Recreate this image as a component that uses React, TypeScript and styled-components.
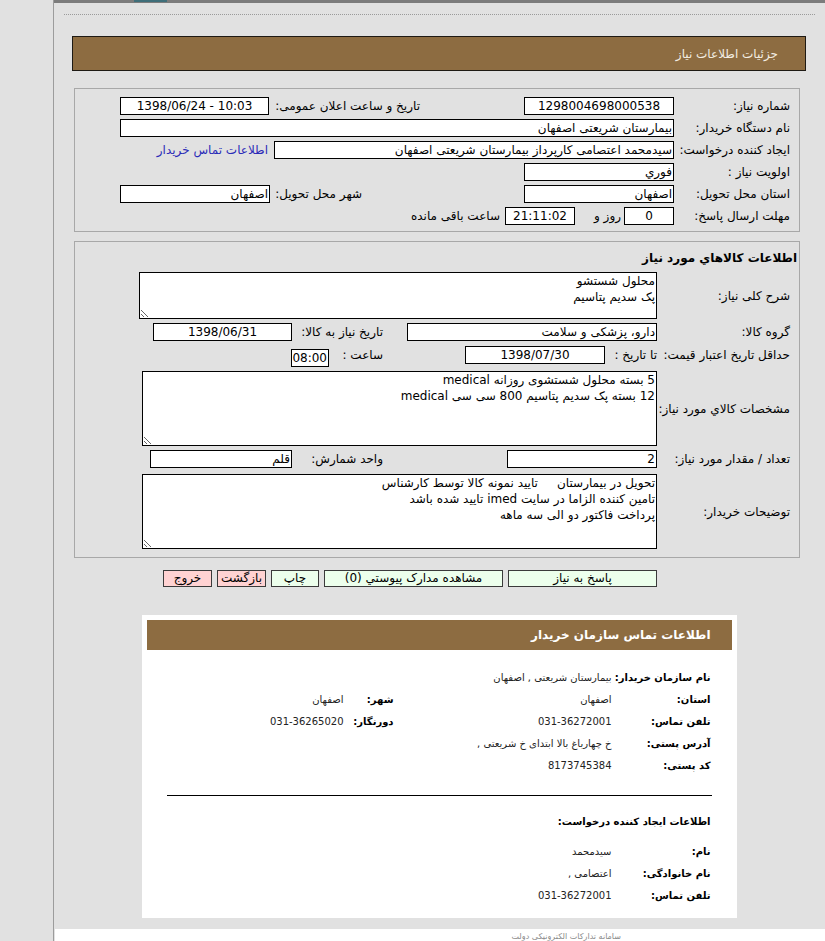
import { Fragment } from "react";
import styled, { createGlobalStyle } from "styled-components";

const GlobalStyle = createGlobalStyle`
  html, body {
    margin: 0;
    padding: 0;
  }
  body {
    background: #e1e1e1;
    font-family: "DejaVu Sans", Tahoma, sans-serif;
    font-size: 12px;
    color: #000;
  }
`;

const Page = styled.div`
  display: flex;
  height: 941px;
  overflow: hidden;
  background: #e1e1e1;
`;

const SideRail = styled.div`
  flex: none;
  width: 53px;
  border-right: 1px solid #9c9c9c;
`;

const Main = styled.div`
  flex: 1;
  min-width: 0;
  display: flex;
  flex-direction: column;
`;

const TopBar = styled.div`
  display: flex;
  height: 3px;
  background: #7c7c7c;
`;

const TopTab = styled.span`
  margin-left: 80px;
  width: 33px;
  height: 2px;
  background: #3f6f7a;
`;

const DottedRule = styled.div`
  margin: 11px 10px 0;
  border-top: 1px dotted #9a9a9a;
`;

const Content = styled.div`
  direction: rtl;
  padding: 0 19px 0 18px;
`;

const Banner = styled.div`
  margin-top: 21px;
  height: 35px;
  box-sizing: border-box;
  display: flex;
  align-items: center;
  padding-right: 27px;
  border: 1px solid #1e1a14;
  background: #8d6c41;
  color: #f3ede2;
`;

const Section = styled.div<{ $top: number; $pad: string }>`
  margin: ${p => p.$top}px 6px 0 2px;
  padding: ${p => p.$pad};
  border: 1px solid #a8a8a8;
`;

const SectionTitle = styled.div`
  height: 18px;
  line-height: 18px;
  margin: 0 -7px 5px 0;
  font-weight: bold;
`;

const Row = styled.div<{ $mt?: number }>`
  display: flex;
  align-items: center;
  min-height: 22px;
  margin-top: ${p => p.$mt ?? 0}px;
`;

const Label = styled.div<{ $w: number; $mr?: number }>`
  flex: none;
  width: ${p => p.$w}px;
  margin-right: ${p => p.$mr ?? 0}px;
  white-space: nowrap;
`;

const Field = styled.div<{ $w: number; $center?: boolean; $ltr?: boolean; $mt?: number }>`
  flex: none;
  box-sizing: border-box;
  width: ${p => p.$w}px;
  height: 18px;
  line-height: 16px;
  margin-top: ${p => p.$mt ?? 0}px;
  padding: 0 1px;
  border: 1px solid #000;
  background: #fff;
  text-align: ${p => (p.$center ? "center" : "right")};
  direction: ${p => (p.$ltr ? "ltr" : "rtl")};
  white-space: nowrap;
  overflow: hidden;
`;

const Inline = styled.span<{ $mr?: number; $ml?: number }>`
  flex: none;
  margin-right: ${p => p.$mr ?? 0}px;
  margin-left: ${p => p.$ml ?? 0}px;
  white-space: pre;
`;

const ContactLink = styled.a`
  margin-right: 6px;
  color: #2b2bb8;
  text-decoration: none;
  white-space: nowrap;
`;

const Area = styled.textarea<{ $w: number; $h: number }>`
  flex: none;
  display: block;
  box-sizing: border-box;
  width: ${p => p.$w}px;
  height: ${p => p.$h}px;
  margin: 0;
  padding: 0 1px;
  border: 1px solid #000;
  border-radius: 0;
  background: #fff;
  font-family: "DejaVu Sans", Tahoma, sans-serif;
  font-size: 12px;
  line-height: 16px;
  color: #000;
  direction: rtl;
  outline: none;
`;

const ButtonBar = styled.div`
  display: flex;
  gap: 5px;
  margin-top: 12px;
  padding-right: 149px;
`;

const ActionButton = styled.button<{ $w: number; $danger?: boolean }>`
  box-sizing: border-box;
  width: ${p => p.$w}px;
  height: 17px;
  padding: 0;
  border: 1px solid #3a3a3a;
  border-radius: 0;
  background: ${p => (p.$danger ? "#ffd2d2" : "#ecffec")};
  font-family: "DejaVu Sans", Tahoma, sans-serif;
  font-size: 12px;
  line-height: 15px;
  color: #000;
`;

const Card = styled.div`
  width: 595px;
  box-sizing: border-box;
  margin: 28px auto 0;
  padding: 5px 5px 12px;
  background: #fff;
`;

const CardHeader = styled.div`
  height: 30px;
  display: flex;
  align-items: center;
  padding-right: 21px;
  background: #8d6c41;
  color: #fff;
  font-weight: bold;
`;

const InfoGrid = styled.div<{ $mt: number }>`
  display: grid;
  grid-template-columns: 99px 218px 50px 1fr;
  grid-auto-rows: 22px;
  align-items: center;
  margin-top: ${p => p.$mt}px;
  padding-right: 21px;
`;

const InfoLabel = styled.div`
  font-size: 10px;
  font-weight: bold;
  white-space: nowrap;
`;

const InfoValue = styled.div<{ $span?: number }>`
  grid-column: span ${p => p.$span ?? 1};
  font-size: 10px;
  color: #222;
  white-space: nowrap;
`;

const Divider = styled.div`
  margin: 19px 20px 0;
  border-top: 1px solid #000;
`;

const SubTitle = styled.div`
  height: 18px;
  line-height: 18px;
  margin-top: 17px;
  padding-right: 21px;
  font-size: 10px;
  font-weight: bold;
`;

const Footer = styled.div`
  flex: 1;
  direction: rtl;
  margin: 11px 0 0 1px;
  padding: 3px 204px 0 0;
  background: #fff;
  color: #8a8a8a;
  font-size: 8px;
  line-height: 9px;
`;

const buyerRows = [
  { label: "نام سازمان خریدار:", value: "بیمارستان شریعتی , اصفهان", span: 3 },
  { label: "استان:", value: "اصفهان", extra: ["شهر:", "اصفهان"] },
  { label: "تلفن تماس:", value: "031-36272001", extra: ["دورنگار:", "031-36265020"] },
  { label: "آدرس پستی:", value: "خ چهارباغ بالا ابتدای خ شریعتی ,", span: 3 },
  { label: "کد پستی:", value: "8173745384", span: 3 },
];

const creatorRows = [
  { label: "نام:", value: "سیدمحمد" },
  { label: "نام خانوادگی:", value: "اعتصامی ," },
  { label: "تلفن تماس:", value: "031-36272001" },
];

export default function App() {
  return (
    <>
      <GlobalStyle />
      <Page>
        <SideRail />
        <Main>
          <TopBar>
            <TopTab />
          </TopBar>
          <DottedRule />
          <Content>
            <Banner>جزئیات اطلاعات نیاز</Banner>

            <Section $top={17} $pad="6px 9px 4px 0">
              <Row>
                <Label $w={116}>شماره نیاز:</Label>
                <Field $w={150} $center>1298004698000538</Field>
                <Label $w={151} $mr={104}>تاریخ و ساعت اعلان عمومی:</Label>
                <Field $w={149} $center $ltr>1398/06/24 - 10:03</Field>
              </Row>
              <Row>
                <Label $w={116}>نام دستگاه خریدار:</Label>
                <Field $w={554}>بیمارستان شریعتی اصفهان</Field>
              </Row>
              <Row>
                <Label $w={116}>ایجاد کننده درخواست:</Label>
                <Field $w={400}>سیدمحمد اعتصامی کارپرداز بیمارستان شریعتی اصفهان</Field>
                <ContactLink href="#">اطلاعات تماس خریدار</ContactLink>
              </Row>
              <Row>
                <Label $w={116}>اولویت نیاز :</Label>
                <Field $w={150}>فوري</Field>
              </Row>
              <Row>
                <Label $w={116}>استان محل تحویل:</Label>
                <Field $w={150}>اصفهان</Field>
                <Label $w={92} $mr={162}>شهر محل تحویل:</Label>
                <Field $w={150}>اصفهان</Field>
              </Row>
              <Row>
                <Label $w={116}>مهلت ارسال پاسخ:</Label>
                <Field $w={50} $center>0</Field>
                <Inline $mr={3} $ml={19}>روز و</Inline>
                <Field $w={70} $center>21:11:02</Field>
                <Inline $mr={5}>ساعت باقی مانده</Inline>
              </Row>
            </Section>

            <Section $top={9} $pad="7px 9px 8px 0">
              <SectionTitle>اطلاعات کالاهاي مورد نیاز</SectionTitle>
              <Row>
                <Label $w={133}>شرح کلی نیاز:</Label>
                <Area $w={518} $h={47} readOnly value={"محلول شستشو\nپک سدیم پتاسیم"} />
              </Row>
              <Row $mt={2}>
                <Label $w={133}>گروه کالا:</Label>
                <Field $w={250}>دارو، پزشکی و سلامت</Field>
                <Label $w={91} $mr={24}>تاریخ نیاز به کالا:</Label>
                <Field $w={139} $center>1398/06/31</Field>
              </Row>
              <Row>
                <Label $w={133}>حداقل تاریخ اعتبار قیمت:</Label>
                <Label $w={52}>تا تاریخ :</Label>
                <Field $w={140} $center>1398/07/30</Field>
                <Label $w={54} $mr={82}>ساعت :</Label>
                <Field $w={38} $center $mt={6}>08:00</Field>
              </Row>
              <Row $mt={4}>
                <Label $w={133}>مشخصات کالاي مورد نیاز:</Label>
                <Area
                  $w={515}
                  $h={75}
                  readOnly
                  value={"5 بسته محلول شستشوی روزانه medical\n12 بسته پک سدیم پتاسیم 800 سی سی medical"}
                />
              </Row>
              <Row $mt={2}>
                <Label $w={133}>تعداد / مقدار مورد نیاز:</Label>
                <Field $w={150}>2</Field>
                <Label $w={91} $mr={124}>واحد شمارش:</Label>
                <Field $w={142}>قلم</Field>
              </Row>
              <Row $mt={4}>
                <Label $w={133}>توضیحات خریدار:</Label>
                <Area
                  $w={515}
                  $h={75}
                  readOnly
                  value={
                    "تحویل در بیمارستان     تایید نمونه کالا توسط کارشناس\nتامین کننده الزاما در سایت imed تایید شده باشد\nپرداخت فاکتور دو الی سه ماهه"
                  }
                />
              </Row>
            </Section>

            <ButtonBar>
              <ActionButton $w={149}>پاسخ به نیاز</ActionButton>
              <ActionButton $w={179}>مشاهده مدارک پیوستي (0)</ActionButton>
              <ActionButton $w={48}>چاپ</ActionButton>
              <ActionButton $w={49} $danger>بازگشت</ActionButton>
              <ActionButton $w={49} $danger>خروج</ActionButton>
            </ButtonBar>

            <Card>
              <CardHeader>اطلاعات تماس سازمان خریدار</CardHeader>
              <InfoGrid $mt={16}>
                {buyerRows.map(r => (
                  <Fragment key={r.label}>
                    <InfoLabel>{r.label}</InfoLabel>
                    <InfoValue $span={r.span}>{r.value}</InfoValue>
                    {r.extra && (
                      <>
                        <InfoLabel>{r.extra[0]}</InfoLabel>
                        <InfoValue>{r.extra[1]}</InfoValue>
                      </>
                    )}
                  </Fragment>
                ))}
              </InfoGrid>
              <Divider />
              <SubTitle>اطلاعات ایجاد کننده درخواست:</SubTitle>
              <InfoGrid $mt={9}>
                {creatorRows.map(r => (
                  <Fragment key={r.label}>
                    <InfoLabel>{r.label}</InfoLabel>
                    <InfoValue $span={3}>{r.value}</InfoValue>
                  </Fragment>
                ))}
              </InfoGrid>
            </Card>
          </Content>
          <Footer>سامانه تدارکات الکترونیکی دولت</Footer>
        </Main>
      </Page>
    </>
  );
}
